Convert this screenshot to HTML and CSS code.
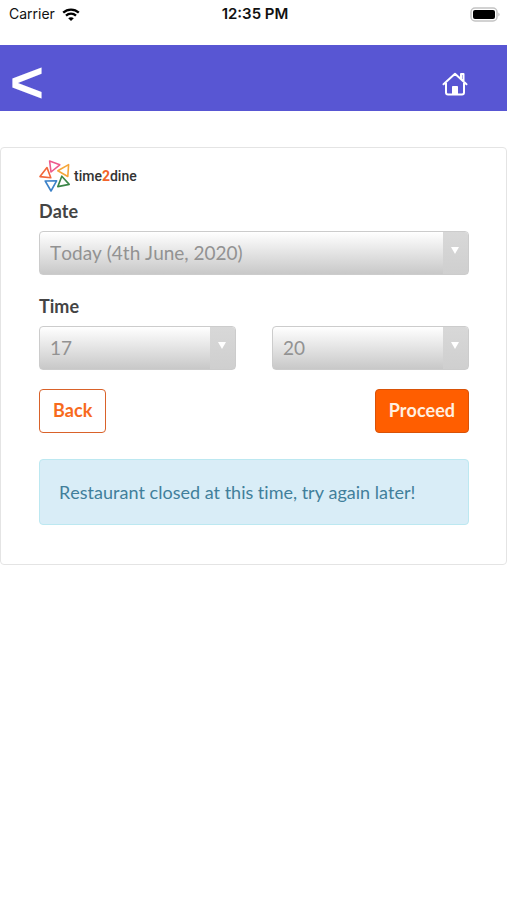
FILE: index.html
```html
<!DOCTYPE html>
<html lang="en">
<head>
<meta charset="utf-8">
<meta name="viewport" content="width=device-width, initial-scale=1">
<title>time2dine</title>
<link rel="stylesheet" href="styles.css">
</head>
<body>
<div class="status">
  <div class="status-left">
    <span>Carrier</span>
    <svg class="wifi" viewBox="0 0 18 13" aria-hidden="true">
      <path d="M1.2 4.6C5.6.5 12.4.5 16.8 4.6M4 7.6c2.8-2.6 7.200-2.600 10 0" fill="none" stroke="#000" stroke-width="2.300"/>
      <path d="M9 13 6.200 10.200c1.600-1.400 4-1.400 5.600 0z"/>
    </svg>
  </div>
  <span class="clock">12:35 PM</span>
  <svg class="battery" viewBox="0 0 31 15" aria-hidden="true">
    <rect x="1" y="1" width="26" height="13" rx="4" fill="#fff" stroke="#c4c4c4" stroke-width="1.500"/>
    <rect x="3" y="3" width="22" height="9" rx="2"/>
    <path d="M28.500 5.500q2 2 0 4z" fill="#aaa"/>
  </svg>
</div>
<header class="bar">
  <a class="bar-back" href="#" aria-label="Go back">&lt;</a>
  <a class="bar-home" href="#" aria-label="Home">
    <svg viewBox="0 0 26 24" fill="none" stroke="#fff" stroke-width="2" stroke-linecap="round" stroke-linejoin="round">
      <path d="M1.500 12.300 13 1.800 24.500 12.300M19 7V2h2.500v7.500M4 11v9.500q0 2 2 2h14q2 0 2-2V11"/>
      <path d="M10.500 22v-7.500h5V22z" fill="#fff" stroke-width="1"/>
    </svg>
  </a>
</header>
<main class="card">
  <div class="logo">
    <svg viewBox="0 0 32 34" fill="none" stroke-width="1.600" stroke-linejoin="round" aria-hidden="true">
      <path d="M10.600 2 20.800 5.800 12 13z" stroke="#ee5a8c"/>
      <path d="M18.800 11.800 29.600 5.600 28.800 17.500z" stroke="#f6a63a"/>
      <path d="M8 8.600 11.800 18.800 1 17.600z" stroke="#f2673a"/>
      <path d="M22.800 17.200 30.200 25.400 18.800 27.600z" stroke="#3b8648"/>
      <path d="M6.200 22 17.600 21.800 12 32z" stroke="#3d82c8"/>
    </svg>
    <span class="logo-name">time<b>2</b>dine</span>
  </div>
  <form class="form">
    <div class="field">
      <label for="date">Date</label>
      <div class="select"><select id="date"><option>Today (4th June, 2020)</option></select></div>
    </div>
    <div class="field">
      <label for="hour">Time</label>
      <div class="pair">
        <div class="select"><select id="hour"><option>17</option></select></div>
        <div class="select"><select id="minute" aria-label="Minutes"><option>20</option></select></div>
      </div>
    </div>
    <div class="actions">
      <button class="btn" type="button">Back</button>
      <button class="btn btn-main" type="button">Proceed</button>
    </div>
  </form>
  <p class="alert" role="status">Restaurant closed at this time, try again later!</p>
</main>
</body>
</html>
```
FILE: styles.css
```css
* {
  box-sizing: border-box;
}

body {
  margin: 0;
  background: #fff;
  color: #444;
  font: 19px/24px Lato, sans-serif;
  font-kerning: none;
  font-variant-ligatures: none;
}

.status {
  display: grid;
  grid-template-columns: 1fr auto 1fr;
  align-items: center;
  height: 45px;
  padding: 0 6px 17px 9px;
  color: #111;
  font: 14px/20px Inter, sans-serif;
}

.status-left {
  display: flex;
  align-items: center;
  gap: 7px;
}

.wifi {
  width: 18px;
  height: 13px;
}

.clock {
  font-size: 15px;
  font-weight: 600;
}

.battery {
  width: 31px;
  height: 15px;
  justify-self: end;
}

.bar {
  display: flex;
  align-items: center;
  justify-content: space-between;
  height: 66px;
  padding: 8px 39px 0 10px;
  background: #5856d3;
}

.bar-back {
  color: #fff;
  font: bold 58px/58px "Liberation Sans", sans-serif;
  text-decoration: none;
}

.bar-home {
  display: flex;
  padding-top: 4px;
}

.bar-home svg {
  width: 26px;
  height: 24px;
}

.card {
  margin-top: 36px;
  padding: 11px 37px 39px 38px;
  border: 1px solid #e4e4e4;
  border-radius: 4px;
}

.logo {
  display: flex;
  align-items: center;
  gap: 3px;
  margin-bottom: 6px;
}

.logo svg {
  width: 32px;
  height: 34px;
}

.logo-name {
  color: #333;
  font: 500 14px/20px Roboto, sans-serif;
}

.logo-name b {
  color: #f2642a;
}

.form {
  display: flex;
  flex-direction: column;
  gap: 19px;
}

.field {
  display: flex;
  flex-direction: column;
  gap: 8px;
}

.field label {
  font-size: 18px;
  font-weight: 700;
}

.pair {
  display: grid;
  grid-template-columns: 1fr 1fr;
  gap: 36px;
}

.select {
  position: relative;
}

.select select {
  display: block;
  width: 100%;
  height: 44px;
  padding: 0 36px 0 10px;
  appearance: none;
  border: 1px solid #ccc;
  border-radius: 4px;
  background: linear-gradient(#fff, #c8c8c8);
  color: #929292;
  font: inherit;
  font-kerning: none;
}

.select::before {
  content: "";
  position: absolute;
  top: 1px;
  right: 1px;
  bottom: 1px;
  width: 25px;
  border-radius: 0 3px 3px 0;
  background: linear-gradient(#d8d8d8, #cfcfcf);
  pointer-events: none;
}

.select::after {
  content: "";
  position: absolute;
  top: 16px;
  right: 10px;
  border: 4px solid transparent;
  border-top: 7px solid #fff;
  border-bottom: 0;
  pointer-events: none;
}

.actions {
  display: flex;
  justify-content: space-between;
}

.btn {
  height: 44px;
  padding: 0 13px 2px;
  border: 1px solid #d9622a;
  border-radius: 4px;
  background: #fff;
  color: #f76a1c;
  font: 700 18px/24px Lato, sans-serif;
  font-kerning: none;
}

.btn-main {
  border-color: #d95207;
  background: #ff5e00;
  color: #fff0e0;
}

.alert {
  margin: 26px 0 0;
  padding: 20px 19px;
  border: 1px solid #bce8f1;
  border-radius: 4px;
  background: #d9edf7;
  color: #417f9b;
  font-size: 18px;
}
```
